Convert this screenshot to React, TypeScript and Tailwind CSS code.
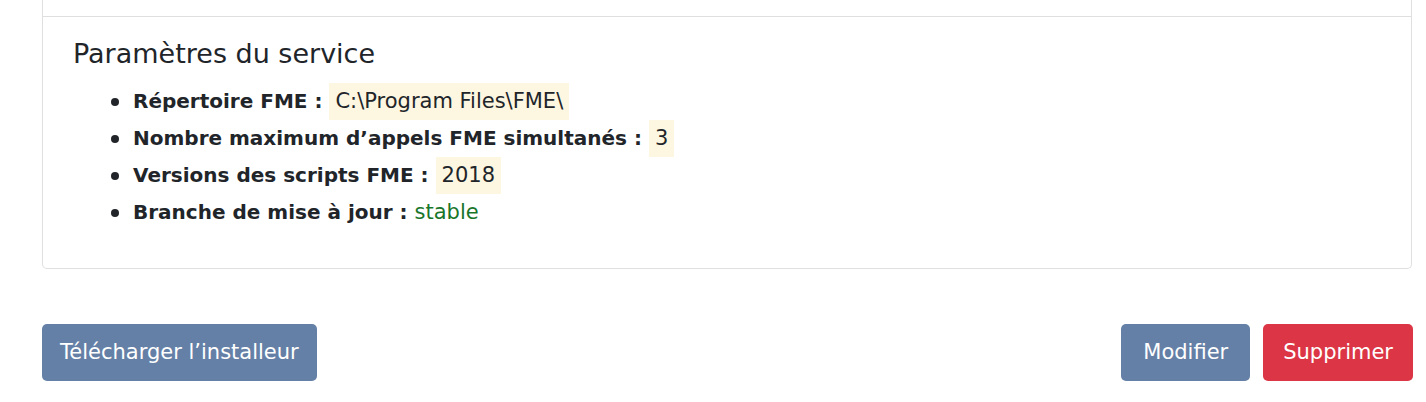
import React from 'react';

const font = { fontFamily: '"DejaVu Sans", "Noto Sans", sans-serif' };

const Code = ({ children }: { children: React.ReactNode }) => (
  <span className="inline-block bg-[#fdf6e1] px-[6px] text-[21px] font-normal leading-[37px] text-[#212529]">
    {children}
  </span>
);

const App = () => {
  const items = [
    { label: 'Répertoire FME :', value: <Code>C:\Program Files\FME\</Code> },
    { label: 'Nombre maximum d’appels FME simultanés :', value: <Code>3</Code> },
    { label: 'Versions des scripts FME :', value: <Code>2018</Code> },
    {
      label: 'Branche de mise à jour :',
      value: <span className="text-[21px] font-normal text-[#18762a]">stable</span>,
    },
  ];

  return (
    <div className="min-h-screen bg-white text-[#212529]" style={font}>
      <div className="ml-[42px] mr-[14px]">
        {/* card */}
        <div className="rounded-b-[5px] border-x border-b border-[#dfdfdf]">
          <div className="h-[16px]" />
          <div className="border-t border-[#dfdfdf] px-[30px] pt-[19px] pb-[37px]">
            <h4 className="text-[27px] font-normal leading-[36px]">Paramètres du service</h4>
            <ul className="mt-[11px] pl-[60px] text-[20px] font-bold">
              {items.map((it) => (
                <li key={it.label} className="leading-[37px]">
                  <span className="-ml-[22px] mr-[14px] inline-block size-[8px] rounded-full bg-[#212529] align-[2px]" />
                  {it.label} {it.value}
                </li>
              ))}
            </ul>
          </div>
        </div>

        {/* actions */}
        <div className="mt-[55px] -mr-px flex items-center justify-between">
          <button className="h-[57px] rounded-[5px] bg-[#6580a6] px-[18px] text-[21px] text-white">
            Télécharger l’installeur
          </button>
          <div className="flex gap-[13px]">
            <button className="h-[57px] rounded-[5px] bg-[#6580a6] px-[22px] text-[21px] text-white">
              Modifier
            </button>
            <button className="h-[57px] rounded-[5px] bg-[#dc3545] px-[20px] text-[21px] text-white">
              Supprimer
            </button>
          </div>
        </div>
      </div>
    </div>
  );
};

export default App;
